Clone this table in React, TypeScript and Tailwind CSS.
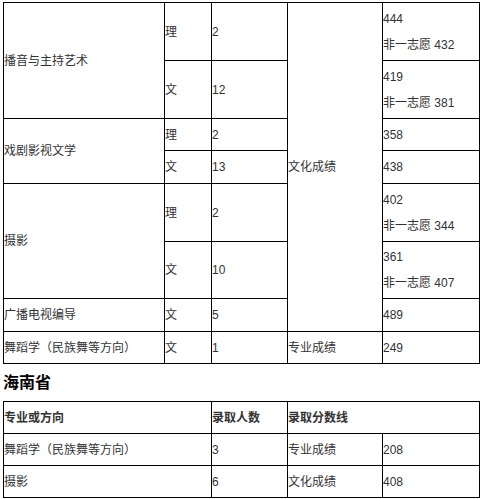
const cell = 'border border-black p-0 align-middle text-left font-normal';

function Two({ a, b }: { a: string; b: string }) {
  return (
    <div className="leading-[26px]">
      <div>{a}</div>
      <div>{b}</div>
    </div>
  );
}

export default function App() {
  return (
    <div
      className="min-h-screen bg-white pl-[3px] pt-[2px] text-[12px] text-[#333]"
      style={{ fontFamily: '"Liberation Sans", "Noto Sans CJK SC", sans-serif' }}
    >
      <table className="w-[476px] table-fixed border-collapse">
        <colgroup>
          <col className="w-[161px]" />
          <col className="w-[47px]" />
          <col className="w-[76px]" />
          <col className="w-[95px]" />
          <col className="w-[97px]" />
        </colgroup>
        <tbody>
          <tr className="h-[58px]">
            <td className={cell} rowSpan={2}>播音与主持艺术</td>
            <td className={cell}>理</td>
            <td className={cell}>2</td>
            <td className={cell} rowSpan={7}>文化成绩</td>
            <td className={cell}><Two a="444" b="非一志愿 432" /></td>
          </tr>
          <tr className="h-[58px]">
            <td className={cell}>文</td>
            <td className={cell}>12</td>
            <td className={cell}><Two a="419" b="非一志愿 381" /></td>
          </tr>
          <tr className="h-[32px]">
            <td className={cell} rowSpan={2}>戏剧影视文学</td>
            <td className={cell}>理</td>
            <td className={cell}>2</td>
            <td className={cell}>358</td>
          </tr>
          <tr className="h-[33px]">
            <td className={cell}>文</td>
            <td className={cell}>13</td>
            <td className={cell}>438</td>
          </tr>
          <tr className="h-[58px]">
            <td className={cell} rowSpan={2}>摄影</td>
            <td className={cell}>理</td>
            <td className={cell}>2</td>
            <td className={cell}><Two a="402" b="非一志愿 344" /></td>
          </tr>
          <tr className="h-[57px]">
            <td className={cell}>文</td>
            <td className={cell}>10</td>
            <td className={cell}><Two a="361" b="非一志愿 407" /></td>
          </tr>
          <tr className="h-[33px]">
            <td className={cell}>广播电视编导</td>
            <td className={cell}>文</td>
            <td className={cell}>5</td>
            <td className={cell}>489</td>
          </tr>
          <tr className="h-[32px]">
            <td className={cell}>舞蹈学（民族舞等方向）</td>
            <td className={cell}>文</td>
            <td className={cell}>1</td>
            <td className={cell}>专业成绩</td>
            <td className={cell}>249</td>
          </tr>
        </tbody>
      </table>

      <h3 className="flex h-[37px] items-center text-[16px] font-bold text-black">海南省</h3>

      <table className="w-[476px] table-fixed border-collapse">
        <colgroup>
          <col className="w-[208px]" />
          <col className="w-[76px]" />
          <col className="w-[95px]" />
          <col className="w-[97px]" />
        </colgroup>
        <tbody>
          <tr className="h-[32px]">
            <th className={cell + ' !font-bold'}>专业或方向</th>
            <th className={cell + ' !font-bold'}>录取人数</th>
            <th className={cell + ' !font-bold'} colSpan={2}>录取分数线</th>
          </tr>
          <tr className="h-[32px]">
            <td className={cell}>舞蹈学（民族舞等方向）</td>
            <td className={cell}>3</td>
            <td className={cell}>专业成绩</td>
            <td className={cell}>208</td>
          </tr>
          <tr className="h-[32px]">
            <td className={cell}>摄影</td>
            <td className={cell}>6</td>
            <td className={cell}>文化成绩</td>
            <td className={cell}>408</td>
          </tr>
        </tbody>
      </table>
    </div>
  );
}
